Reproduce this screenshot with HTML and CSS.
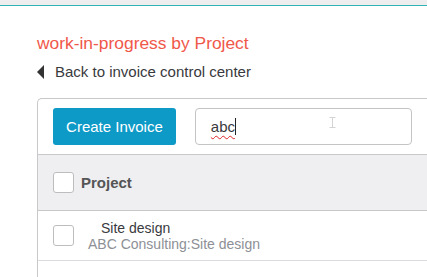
FILE: index.html
```html
<!DOCTYPE html>
<html lang="en">
<head>
    <meta charset="UTF-8">
    <meta name="viewport" content="width=device-width, initial-scale=1.0">
    <title>Work-in-progress by Project</title>
    <link rel="stylesheet" href="styles.css">
</head>
<body>
    <div class="topbar"></div>
    <div class="page">
        <h1 class="title">work-in-progress by Project</h1>
        <a class="back-link" href="#">
            <span class="back-arrow"></span>
            Back to invoice control center
        </a>

        <div class="card">
            <div class="toolbar">
                <button class="create-btn">Create Invoice</button>
                <div class="search">
                    <span class="search-text">abc</span><span class="caret"></span>
                    <svg class="ibeam" width="7" height="11" viewBox="0 0 7 11">
                        <path d="M0.5 0.5h6M3.5 0.5v10M0.5 10.5h6" stroke="#d4d4d4" fill="none"/>
                    </svg>
                </div>
            </div>

            <div class="table-head">
                <span class="checkbox"></span>
                <span class="col-title">Project</span>
            </div>

            <div class="table-row">
                <span class="checkbox"></span>
                <div class="row-text">
                    <div class="row-name">Site design</div>
                    <div class="row-sub">ABC Consulting:Site design</div>
                </div>
            </div>
        </div>
    </div>
</body>
</html>
```

FILE: styles.css
```css
body {
    font-family: "Liberation Sans", Arial, sans-serif;
    margin: 0;
    background-color: #fff;
    height: 277px;
    overflow: hidden;
    display: flex;
    flex-direction: column;
}

.topbar {
    height: 5px;
    background-color: #eeeeee;
    border-bottom: 1px solid #2bb3b5;
}

.page {
    flex: 1;
    display: flex;
    flex-direction: column;
    padding-left: 37px;
}

.title {
    margin: 26px 0 0;
    font-size: 17.4px;
    font-weight: normal;
    color: #f0584a;
    line-height: 22px;
}

.back-link {
    display: flex;
    align-items: center;
    margin-top: 9px;
    font-size: 15px;
    color: #393a3d;
    text-decoration: none;
    line-height: 18px;
}

.back-arrow {
    width: 0;
    height: 0;
    border-top: 7px solid transparent;
    border-bottom: 7px solid transparent;
    border-right: 7px solid #333;
    margin-right: 11px;
}

.card {
    flex: 1;
    margin-top: 17px;
    border: 1px solid #c8c8c8;
    border-right: none;
    border-bottom: none;
    border-radius: 5px 0 0 0;
}

.toolbar {
    display: flex;
    align-items: center;
    gap: 19px;
    padding: 9px 15px;
    border-bottom: 1px solid #c8c8c8;
}

.create-btn {
    width: 124px;
    height: 37px;
    background-color: #0d9ac7;
    color: #fff;
    border: none;
    border-radius: 3px;
    font-family: inherit;
    font-size: 15px;
    padding: 0;
}

.search {
    position: relative;
    display: flex;
    align-items: center;
    box-sizing: border-box;
    width: 219px;
    height: 37px;
    padding-left: 15px;
    border: 1px solid #c4c4c4;
    border-radius: 4px;
    font-size: 15px;
    color: #393a3d;
}

.search-text {
    text-decoration: underline wavy #e0262a;
    text-decoration-thickness: 1px;
    text-underline-offset: 3px;
}

.caret {
    width: 1px;
    height: 17px;
    background-color: #222;
}

.ibeam {
    position: absolute;
    left: 133px;
    top: 8px;
}

.table-head {
    display: flex;
    align-items: center;
    height: 55px;
    padding-left: 15px;
    background-color: #efeff2;
    border-bottom: 1px solid #c8c8c8;
}

.checkbox {
    box-sizing: border-box;
    width: 21px;
    height: 21px;
    background-color: #fff;
    border: 1px solid #bdbdbd;
    border-radius: 3px;
    flex-shrink: 0;
}

.col-title {
    margin-left: 7px;
    font-size: 15px;
    font-weight: bold;
    color: #555;
}

.table-row {
    display: flex;
    align-items: center;
    height: 49px;
    padding-left: 15px;
    border-bottom: 1px solid #dcdce0;
}

.row-text {
    margin-left: 14px;
    font-size: 14px;
    line-height: 16px;
}

.row-name {
    padding-left: 13px;
    color: #393a3d;
}

.row-sub {
    color: #8d9096;
}
```
